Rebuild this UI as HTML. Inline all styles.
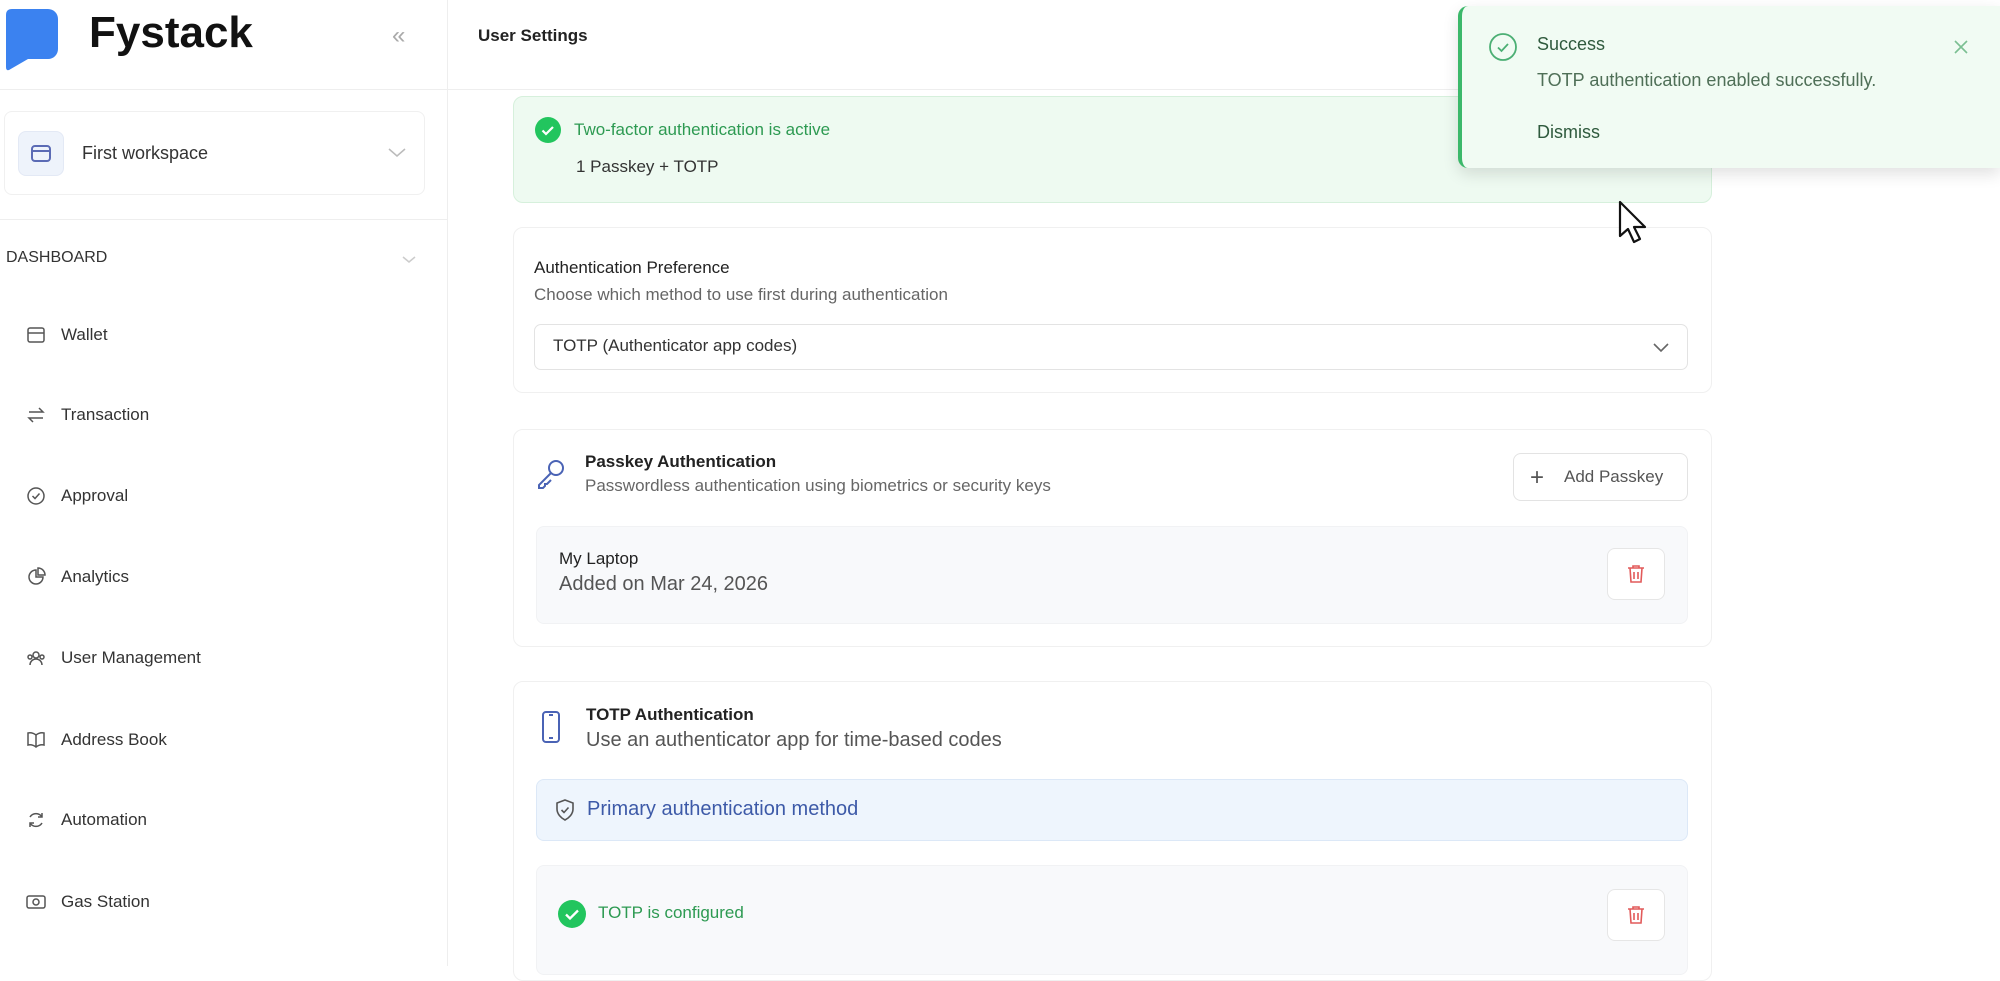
<!DOCTYPE html>
<html><head><meta charset="utf-8"><style>
*{box-sizing:border-box;margin:0;padding:0}
body{width:2000px;height:966px;overflow:hidden;background:#fff;font-family:"Liberation Sans",sans-serif;color:#222;position:relative}
.abs{position:absolute}
.side{left:0;top:0;width:448px;height:966px;border-right:1px solid #eee}
.nav{position:absolute;left:26px;font-size:17px;color:#333;font-weight:500;display:flex;align-items:center}
.nav svg{margin-right:15px}
.card{position:absolute;left:513px;width:1199px;border:1px solid #f0f0f0;border-radius:10px;background:#fff}
.t{position:absolute;white-space:nowrap}
.trash{position:absolute;left:1607px;width:58px;height:52px;border:1px solid #e6e6e6;border-radius:8px;background:#fff;display:flex;align-items:center;justify-content:center}
</style></head><body>
<div class="abs side">
  <svg class="abs" style="left:6px;top:9px" width="52" height="62" viewBox="0 0 52 62"><path d="M6 0H42a10 10 0 0 1 10 10V40a10 10 0 0 1-10 10H22L3 61Q0 62 0 58V6Q0 0 6 0Z" fill="#3b82f0"/></svg>
  <div class="t" style="left:89px;top:8px;font-size:44px;font-weight:bold;color:#111">Fystack</div>
  <div class="t" style="left:392px;top:22px;font-size:24px;color:#aaa">«</div>
  <div class="abs" style="left:0;top:89px;width:448px;border-top:1px solid #eee"></div>
  <div class="abs" style="left:4px;top:111px;width:421px;height:84px;border:1px solid #f0f0f0;border-radius:8px"></div>
  <div class="abs" style="left:18px;top:131px;width:46px;height:45px;border-radius:8px;background:#eef3fb;border:1px solid #e3e9f5"></div>
  <svg class="abs" style="left:31px;top:145px" width="20" height="18"><rect x="1" y="1" width="18" height="15" rx="3" fill="none" stroke="#5b6bb5" stroke-width="2"/><line x1="1" y1="6" x2="19" y2="6" stroke="#5b6bb5" stroke-width="2"/></svg>
  <div class="t" style="left:82px;top:143px;font-size:18px;color:#333">First workspace</div>
  <svg class="abs" style="left:388px;top:148px" width="18" height="10"><path d="M1 1l8 7 8-7" fill="none" stroke="#bbb" stroke-width="1.5"/></svg>
  <div class="abs" style="left:0;top:219px;width:448px;border-top:1px solid #eee"></div>
  <div class="t" style="left:6px;top:249px;font-size:16px;color:#333">DASHBOARD</div>
  <svg class="abs" style="left:402px;top:256px" width="14" height="8"><path d="M1 1l6 5 6-5" fill="none" stroke="#ccc" stroke-width="1.5"/></svg>
  <div class="nav" style="top:325px"><svg width="20" height="20"><rect x="2" y="3" width="16" height="14" rx="2" fill="none" stroke="#555" stroke-width="1.5"/><path d="M2 8h16" stroke="#555" stroke-width="1.5"/></svg>Wallet</div>
  <div class="nav" style="top:405px"><svg width="20" height="20"><path d="M3 7h14l-4-4M17 13H3l4 4" fill="none" stroke="#555" stroke-width="1.5"/></svg>Transaction</div>
  <div class="nav" style="top:486px"><svg width="20" height="20"><circle cx="10" cy="10" r="8" fill="none" stroke="#555" stroke-width="1.5"/><path d="M6.5 10l2.5 2.5 4.5-5" fill="none" stroke="#555" stroke-width="1.5"/></svg>Approval</div>
  <div class="nav" style="top:567px"><svg width="20" height="20"><path d="M10 3a7 7 0 1 0 7 7h-7z" fill="none" stroke="#555" stroke-width="1.5"/><path d="M12 1v7h7a7 7 0 0 0-7-7z" fill="none" stroke="#555" stroke-width="1.5"/></svg>Analytics</div>
  <div class="nav" style="top:648px"><svg width="20" height="20"><circle cx="10" cy="7" r="3" fill="none" stroke="#555" stroke-width="1.5"/><circle cx="4" cy="9" r="2" fill="none" stroke="#555" stroke-width="1.5"/><circle cx="16" cy="9" r="2" fill="none" stroke="#555" stroke-width="1.5"/><path d="M4 17a6 6 0 0 1 12 0" fill="none" stroke="#555" stroke-width="1.5"/></svg>User Management</div>
  <div class="nav" style="top:730px"><svg width="20" height="20"><path d="M10 5Q6 2 2 3v12q4-1 8 2q4-3 8-2V3q-4-1-8 2zM10 5v12" fill="none" stroke="#555" stroke-width="1.5"/></svg>Address Book</div>
  <div class="nav" style="top:810px"><svg width="20" height="20"><path d="M16 7a7 7 0 0 0-12 0M4 13a7 7 0 0 0 12 0M16 3v4h-4M4 17v-4h4" fill="none" stroke="#555" stroke-width="1.5"/></svg>Automation</div>
  <div class="nav" style="top:892px"><svg width="20" height="20"><rect x="1" y="4" width="18" height="12" rx="2" fill="none" stroke="#555" stroke-width="1.5"/><circle cx="10" cy="10" r="3" fill="none" stroke="#555" stroke-width="1.5"/></svg>Gas Station</div>
</div>
<div class="t" style="left:478px;top:26px;font-size:17px;font-weight:bold;color:#222">User Settings</div>
<div class="abs" style="left:448px;top:89px;width:1552px;border-top:1px solid #eee"></div>

<div class="card" style="top:96px;height:107px;background:#eefaf1;border-color:#d6f0dc"></div>
<svg class="abs" style="left:535px;top:117px" width="26" height="26"><circle cx="13" cy="13" r="13" fill="#22c55e"/><path d="M7.5 13.5l3.5 3.5 7-7" fill="none" stroke="#fff" stroke-width="2.2"/></svg>
<div class="t" style="left:574px;top:120px;font-size:17px;color:#2d9a52">Two-factor authentication is active</div>
<div class="t" style="left:576px;top:157px;font-size:17px;color:#333">1 Passkey + TOTP</div>

<div class="card" style="top:227px;height:166px"></div>
<div class="t" style="left:534px;top:258px;font-size:17px;color:#222">Authentication Preference</div>
<div class="t" style="left:534px;top:285px;font-size:17px;color:#666">Choose which method to use first during authentication</div>
<div class="abs" style="left:534px;top:324px;width:1154px;height:46px;border:1px solid #e3e3e3;border-radius:7px"></div>
<div class="t" style="left:553px;top:336px;font-size:17px;color:#333">TOTP (Authenticator app codes)</div>
<svg class="abs" style="left:1653px;top:343px" width="16" height="10"><path d="M1 1l7 7 7-7" fill="none" stroke="#666" stroke-width="1.6"/></svg>

<div class="card" style="top:429px;height:218px"></div>
<svg class="abs" style="left:535px;top:458px" width="32" height="32"><circle cx="21" cy="10" r="7" fill="none" stroke="#4a63b5" stroke-width="2"/><path d="M16 15L4 27v3h4l2-2v-2h2l4-4" fill="none" stroke="#4a63b5" stroke-width="2"/></svg>
<div class="t" style="left:585px;top:452px;font-size:17px;font-weight:bold;color:#222">Passkey Authentication</div>
<div class="t" style="left:585px;top:476px;font-size:17px;color:#666">Passwordless authentication using biometrics or security keys</div>
<div class="abs" style="left:1513px;top:453px;width:175px;height:48px;border:1px solid #e3e3e3;border-radius:8px;background:#fff"></div>
<div class="t" style="left:1530px;top:464px;font-size:24px;color:#555;font-weight:300">+</div>
<div class="t" style="left:1564px;top:467px;font-size:17px;color:#555">Add Passkey</div>
<div class="abs" style="left:536px;top:526px;width:1152px;height:98px;background:#f8f9fb;border-radius:8px;border:1px solid #f1f2f4"></div>
<div class="t" style="left:559px;top:549px;font-size:17px;color:#222">My Laptop</div>
<div class="t" style="left:559px;top:573px;font-size:20px;color:#555">Added on Mar 24, 2026</div>
<div class="trash" style="top:548px"><svg width="18" height="20"><path d="M1 4h16M6 4V2h6v2M3 4l1 14h10l1-14M7 8v7M11 8v7" fill="none" stroke="#e25a5a" stroke-width="1.6"/></svg></div>

<div class="card" style="top:681px;height:300px"></div>
<svg class="abs" style="left:541px;top:710px" width="20" height="34"><rect x="2" y="2" width="16" height="30" rx="3" fill="none" stroke="#4a63b5" stroke-width="2"/><path d="M8 5h4M8 28h4" stroke="#4a63b5" stroke-width="2"/></svg>
<div class="t" style="left:586px;top:705px;font-size:17px;font-weight:bold;color:#222">TOTP Authentication</div>
<div class="t" style="left:586px;top:729px;font-size:20px;color:#555">Use an authenticator app for time-based codes</div>
<div class="abs" style="left:536px;top:779px;width:1152px;height:62px;background:#eef5fd;border:1px solid #dce8f7;border-radius:8px"></div>
<svg class="abs" style="left:555px;top:799px" width="20" height="22"><path d="M10 1l8 3v6c0 5-4 9-8 11-4-2-8-6-8-11V4z" fill="none" stroke="#555" stroke-width="1.6"/><path d="M6.5 11l2.5 2.5 4.5-5" fill="none" stroke="#555" stroke-width="1.6"/></svg>
<div class="t" style="left:587px;top:798px;font-size:20px;color:#3d5aa8">Primary authentication method</div>
<div class="abs" style="left:536px;top:865px;width:1152px;height:110px;background:#f8f9fb;border:1px solid #f1f2f4;border-radius:8px"></div>
<svg class="abs" style="left:558px;top:900px" width="28" height="28"><circle cx="14" cy="14" r="14" fill="#22c55e"/><path d="M8 14.5l4 4 8-8" fill="none" stroke="#fff" stroke-width="2.3"/></svg>
<div class="t" style="left:598px;top:903px;font-size:17px;color:#2d9a52">TOTP is configured</div>
<div class="trash" style="top:889px"><svg width="18" height="20"><path d="M1 4h16M6 4V2h6v2M3 4l1 14h10l1-14M7 8v7M11 8v7" fill="none" stroke="#e25a5a" stroke-width="1.6"/></svg></div>

<div class="abs" style="left:1458px;top:6px;width:542px;height:162px;background:#f1fbf3;border-left:4px solid #3cb86a;border-radius:10px 0 0 10px;box-shadow:0 6px 16px rgba(0,0,0,0.12)"></div>
<svg class="abs" style="left:1488px;top:32px" width="30" height="30"><circle cx="15" cy="15" r="13" fill="none" stroke="#4caf74" stroke-width="1.8"/><path d="M10 15.5l3.5 3.5 6.5-7" fill="none" stroke="#4caf74" stroke-width="1.8"/></svg>
<div class="t" style="left:1537px;top:34px;font-size:18px;color:#2f5a3d">Success</div>
<div class="t" style="left:1537px;top:70px;font-size:18px;color:#4f6f57">TOTP authentication enabled successfully.</div>
<div class="t" style="left:1537px;top:122px;font-size:18px;color:#2f5a3d">Dismiss</div>
<svg class="abs" style="left:1953px;top:39px" width="16" height="16"><path d="M2 2l12 12M14 2L2 14" stroke="#7bbf92" stroke-width="1.6"/></svg>

<svg class="abs" style="left:1618px;top:200px" width="32" height="46"><path d="M2 2v34l8-7 6 13 6-3-6-12h11z" fill="#fff" stroke="#111" stroke-width="2.2" stroke-linejoin="round"/></svg>
</body></html>
